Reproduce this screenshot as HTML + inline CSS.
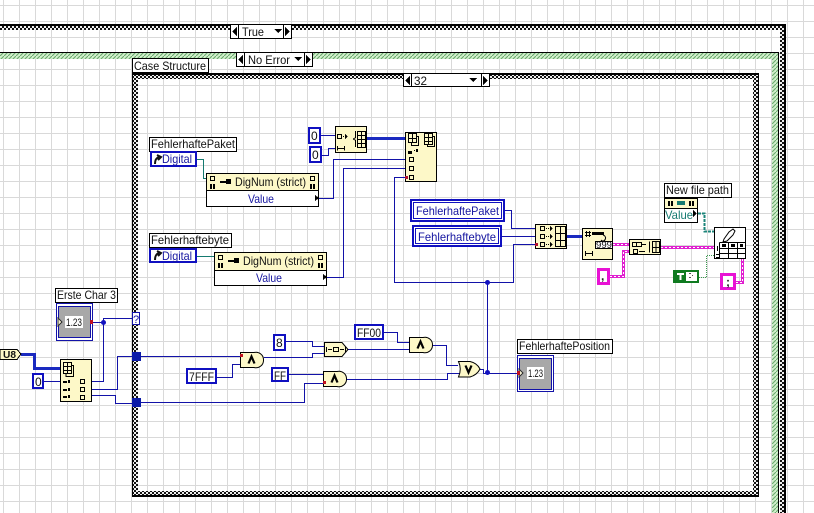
<!DOCTYPE html>
<html><head><meta charset="utf-8"><style>
html,body{margin:0;padding:0;background:#fff;overflow:hidden}
svg{display:block}
text{font-family:"Liberation Sans",sans-serif;font-size:12px;fill:#111}
.b{fill:#1515a0}
.w{fill:none;stroke:#1212a8;stroke-width:1}
.t{fill:none;stroke:#1a2ac0;stroke-width:3}
.n{fill:#fdf8c8;stroke:#000;stroke-width:1}
.l{fill:#fff;stroke:#000;stroke-width:1}
.c{fill:#fff;stroke:#1010c0;stroke-width:2}
.p{fill:none;stroke:#e020d0;stroke-width:3}
.pd{fill:none;stroke:#fff;stroke-width:1;stroke-dasharray:2 2}
.g{fill:none;stroke:#000;stroke-width:1}
.s{fill:#fff;stroke:#000;stroke-width:1}
.k{fill:#000}
</style></head><body>
<svg width="814" height="513" viewBox="0 0 814 513" shape-rendering="crispEdges" xmlns="http://www.w3.org/2000/svg">
<defs>
<pattern id="grid" width="16" height="16" patternUnits="userSpaceOnUse" x="3" y="5"><path d="M0.5 0V16M0 0.5H16" stroke="#d9d9d9" stroke-width="1" fill="none"/></pattern>
<pattern id="chk" width="4" height="4" patternUnits="userSpaceOnUse"><rect width="4" height="4" fill="#eee"/><rect width="2" height="2" fill="#111"/><rect x="2" y="2" width="2" height="2" fill="#111"/></pattern>
<pattern id="hat" width="4" height="4" patternUnits="userSpaceOnUse"><rect width="4" height="4" fill="#d2f0cc"/><path d="M0 4L4 0" stroke="#6aa86e" stroke-width="1.1" shape-rendering="auto"/></pattern>
</defs>
<rect width="814" height="513" fill="#fff"/>
<rect width="814" height="513" fill="url(#grid)"/>

<!-- outer True -->
<path d="M0 24H786V513H780V30H0Z" fill="url(#chk)"/>
<rect x="0" y="24" width="786" height="2" fill="#000"/>
<rect x="784" y="24" width="2" height="489" fill="#000"/>
<!-- green No Error -->
<path d="M0 52H779V513H772V59H0Z" fill="url(#hat)"/>
<rect x="0" y="52" width="779" height="1" fill="#000"/>
<rect x="778" y="52" width="1" height="461" fill="#000"/>
<!-- case 32 -->
<path d="M132 73H759V497H132ZM138 79V491H753V79Z" fill="url(#chk)" fill-rule="evenodd"/>
<rect x="132" y="73" width="627" height="2" fill="#000"/>
<rect x="132" y="495" width="627" height="2" fill="#000"/>
<rect x="132" y="73" width="1" height="424" fill="#000"/>
<rect x="758" y="73" width="1" height="424" fill="#000"/>

<!-- selectors -->
<g>
<rect class="s" x="230.5" y="24.5" width="61" height="14"/><path class="g" d="M238.5 25V38M283.5 25V38"/>
<path class="k" d="M237 27V36L232 31.500Z"/><path class="k" d="M285 27V36L290 31.500Z"/><path class="k" d="M274 29H282L278 33Z"/>
<text x="242" y="36" textLength="22" lengthAdjust="spacingAndGlyphs">True</text>
<rect class="s" x="236.500" y="52.500" width="76" height="14"/><path class="g" d="M244.500 53V66M304.500 53V66"/>
<path class="k" d="M243 55V64L238 59.500Z"/><path class="k" d="M306 55V64L311 59.500Z"/><path class="k" d="M294 57H302L298 61Z"/>
<text x="248" y="64" textLength="42" lengthAdjust="spacingAndGlyphs">No Error</text>
<rect class="s" x="403.500" y="73.500" width="86" height="13"/><path class="g" d="M411.500 74V86M481.500 74V86"/>
<path class="k" d="M410 76V85L405 80.500Z"/><path class="k" d="M483 76V85L488 80.500Z"/><path class="k" d="M469 78H477L473 82Z"/>
<text x="414" y="85" textLength="13" lengthAdjust="spacingAndGlyphs">32</text>
<rect class="s" x="132.500" y="58.500" width="76" height="14"/>
<text x="134" y="70" textLength="72" lengthAdjust="spacingAndGlyphs">Case Structure</text>
</g>

<!-- wires -->
<g>
<path d="M197 159.500H203.500V178.500H207" fill="none" stroke="#157a70"/>
<path d="M197 256.500H214" fill="none" stroke="#157a70"/>
<path class="w" d="M319 198.500H333.500V159.500H405"/>
<path class="w" d="M327 277.500H343.500V168.500H405"/>
<path class="w" d="M405 177.500H394.500V282.500H513.500V244.500H535"/>
<path class="w" d="M487.500 282V373"/>
<path class="w" d="M321 135.500H335"/>
<path class="w" d="M322 155.500H328.500V148.500H335"/>
<path class="t" d="M367 138.500H405"/>
<path class="w" d="M505 210.500H511.500V228.500H535"/>
<path class="w" d="M502 236.500H535"/>
<path class="t" d="M567 236.500H582"/>
<path d="M698 213.500H704.500V231.500H714" fill="none" stroke="#1c857a" stroke-width="2" stroke-dasharray="3 1"/>
<path d="M699 277.500H706.500V255.500H714" fill="none" stroke="#3c9a50" stroke-width="1" stroke-dasharray="1 1"/>
<path class="p" d="M613 244.500H629"/><path class="pd" d="M613 244.500H629"/>
<path class="p" d="M661 247.500H714"/><path class="pd" d="M661 247.500H714"/>
<path class="p" d="M610 276.500H623.500V251.500H629"/><path class="pd" d="M610 276.500H623.500V251.500H629"/>
<path class="p" d="M736 282.500H742.500V259"/><path class="pd" d="M736 282.500H742.500V259"/>
<path class="w" d="M93 322.500H103.500V318.500H132"/>
<path class="w" d="M103.500 322V381.500H92"/>
<path class="t" d="M21 354.500H34.500V368.500H61"/>
<path class="w" d="M44 381.500H61"/>
<path class="w" d="M92 389.500H117.500V356.500H132"/>
<path class="w" d="M92 395.500H115.500V403.500H132"/>
<path class="w" d="M141 356.500H240"/>
<path class="w" d="M141 402.500H304.500V383.500H323"/>
<path class="w" d="M217 377.500H232.500V364.500H240"/>
<path class="w" d="M286 341.500H312.500V346.500H324"/>
<path class="w" d="M264 357.500H312.500V353.500H324"/>
<path class="w" d="M289 374.500H323"/>
<path class="w" d="M384 332.500H397.500V342.500H409"/>
<path class="w" d="M348 349.500H409"/>
<path class="w" d="M433 345.500H446.500V365.500H458"/>
<path class="w" d="M347 379.500H447.500V373.500H460"/>
<path class="w" d="M480 369.500H483.500V373.500H518"/>
</g>
<g shape-rendering="auto" fill="#1212c0">
<circle cx="487.500" cy="282.500" r="2.500"/><circle cx="487.500" cy="372.500" r="2.500"/><circle cx="103.500" cy="322.500" r="2.500"/>
</g>
<rect x="132" y="352" width="9" height="9" fill="#0a1aa8"/>
<rect x="132" y="398" width="9" height="9" fill="#0a1aa8"/>
<rect x="132.500" y="312.500" width="7" height="12" fill="#fff" stroke="#1212a8"/>
<text x="133" y="323" style="font-size:11px;fill:#1212a8">?</text>

<!-- FehlerhaftePaket control + node -->
<rect class="l" x="149.500" y="137.500" width="87" height="14"/>
<text x="151" y="148" textLength="84" lengthAdjust="spacingAndGlyphs">FehlerhaftePaket</text>
<rect class="c" x="151" y="152" width="45" height="14"/>
<path d="M155 164C155 160 156 158 159 157M157 155L161 157L158 160" fill="none" stroke="#111" stroke-width="2" shape-rendering="auto"/>
<text x="162" y="163" textLength="30" lengthAdjust="spacingAndGlyphs" class="b">Digital</text>
<rect class="l" x="206.500" y="173.500" width="112" height="33"/>
<rect class="n" x="206.500" y="173.500" width="112" height="17"/>
<path class="g" d="M210.500 176.500H214.500V180.500H210.500Z M310.500 176.500H314.500V180.500H310.500Z"/>
<path class="k" d="M210 184h2v5h-2zM213 184h2v5h-2zM310 184h2v5h-2zM313 184h2v5h-2z"/>
<path class="k" d="M220 181H226V179H231V184H226V183H220Z"/>
<text x="235" y="186" textLength="71" lengthAdjust="spacingAndGlyphs">DigNum (strict)</text>
<text x="248" y="203" textLength="26" lengthAdjust="spacingAndGlyphs" class="b">Value</text>
<path class="k" d="M315 195V201L319 198Z"/>

<!-- Fehlerhaftebyte control + node -->
<rect class="l" x="149.500" y="233.500" width="82" height="14"/>
<text x="151" y="244" textLength="78" lengthAdjust="spacingAndGlyphs">Fehlerhaftebyte</text>
<rect class="c" x="150" y="249" width="46" height="13"/>
<path d="M155 260C155 256 156 254 159 253M157 251L161 253L158 256" fill="none" stroke="#111" stroke-width="2" shape-rendering="auto"/>
<text x="162" y="260" textLength="30" lengthAdjust="spacingAndGlyphs" class="b">Digital</text>
<rect class="l" x="214.500" y="252.500" width="112" height="33"/>
<rect class="n" x="214.500" y="252.500" width="112" height="18"/>
<path class="g" d="M218.500 255.500H222.500V259.500H218.500Z M318.500 255.500H322.500V259.500H318.500Z"/>
<path class="k" d="M218 263h2v5h-2zM221 263h2v5h-2zM318 263h2v5h-2zM321 263h2v5h-2z"/>
<path class="k" d="M228 260H234V258H239V263H234V262H228Z"/>
<text x="243" y="265" textLength="71" lengthAdjust="spacingAndGlyphs">DigNum (strict)</text>
<text x="256" y="282" textLength="26" lengthAdjust="spacingAndGlyphs" class="b">Value</text>
<path class="k" d="M323 274V280L327 277Z"/>

<!-- zero constants -->
<rect class="c" x="309" y="128" width="11" height="15"/><text x="311" y="140">0</text>
<rect class="c" x="310" y="147" width="11" height="15"/><text x="312" y="159">0</text>

<!-- init array -->
<rect class="n" x="335.500" y="126.500" width="31" height="26"/>
<path class="g" d="M337.500 134.500H341.500V138.500H337.500Z M337.500 146V150.500M344.500 146V150.500M337.500 148.500H344.500"/>
<path class="k" d="M343 136h1v1h-1zM345 134l3 2.500-3 2.500z"/>
<path class="g" d="M355.500 131V137.500L353.500 139L355.500 140.500V147"/>
<path class="g" d="M357.500 131.500H365.500V147.500H357.500Z M357 135.500H366M357 139.500H366M357 143.500H366M361.500 131V148"/>

<!-- build array big -->
<rect class="n" x="405.500" y="132.500" width="31" height="49"/>
<path class="g" d="M408.500 133.500H416.500V142.500H408.500Z M408 138.500H417M412.500 133V143M417 136.500H418.500V145.500H411.500V143"/>
<path class="g" d="M424.500 133.500H432.500V144.500H424.500Z M424 137.500H433M424 141.500H433M428.500 133V145M433 136.500H434.500V146.500H427.500V145"/>
<path class="k" d="M408 151h4v3h-4zM414 150h1v1h-1zM416 149h2v3h-2z"/>
<path class="g" d="M409.500 157.500H413.500V161.500H409.500Z M409.500 166.500H413.500V170.500H409.500Z M409.500 175.500H413.500V179.500H409.500Z"/>
<rect x="405" y="176" width="3" height="3" fill="#b01030"/>

<!-- Fehlerhafte indicators -->
<rect x="411" y="200" width="93" height="21" fill="#fff" stroke="#1010c0" stroke-width="2"/>
<rect x="413.500" y="202.500" width="88" height="16" fill="#fff" stroke="#1010c0"/>
<text x="416" y="215" textLength="83" lengthAdjust="spacingAndGlyphs" class="b">FehlerhaftePaket</text>
<rect x="413" y="226" width="88" height="20" fill="#fff" stroke="#1010c0" stroke-width="2"/>
<rect x="415.500" y="228.500" width="83" height="15" fill="#fff" stroke="#1010c0"/>
<text x="418" y="241" textLength="78" lengthAdjust="spacingAndGlyphs" class="b">Fehlerhaftebyte</text>

<!-- build 3 -->
<rect class="n" x="535.500" y="224.500" width="31" height="24"/>
<path class="g" d="M540.500 226.500H544.500V230.500H540.500Z M540.500 234.500H544.500V238.500H540.500Z M540.500 242.500H544.500V246.500H540.500Z"/>
<path class="k" d="M546 228h1v1h-1zM548 228h1v1h-1zM550 226l3 2.500-3 2.500zM546 236h1v1h-1zM548 236h1v1h-1zM550 234l3 2.500-3 2.500zM546 244h1v1h-1zM548 244h1v1h-1zM550 242l3 2.500-3 2.500z"/>
<path class="g" d="M555.500 226.500H565.500V246.500H555.500Z M555 233.500H566M555 240.500H566M560.500 226V247"/>
<rect x="535" y="243" width="3" height="3" fill="#b01030"/>

<!-- number to string -->
<rect class="n" x="582.500" y="228.500" width="30" height="31"/>
<path class="k" d="M585 232h6v1h-6zM585 235h6v1h-6zM586 231h1v6h-1zM589 231h1v6h-1z M592 232h12v3h-12z"/>
<path d="M603 235a3 3 0 1 1 -1 6M601 240l2 2 2 -2" fill="none" stroke="#000" shape-rendering="auto"/>
<rect x="595.500" y="241.500" width="17" height="7" fill="#fff" stroke="#000"/>
<text x="596" y="248" textLength="16" lengthAdjust="spacingAndGlyphs" style="font-size:9px;">999</text>
<path class="g" d="M585.500 251V256M592.500 251V256M585.500 253.500H592.500"/>

<!-- concat -->
<rect class="n" x="629.500" y="239.500" width="31" height="15"/>
<path class="g" d="M632.500 242.500H641.500V246.500H632.500Z M636.500 242V247 M633.500 249.500H637.500V253.500H633.500Z"/>
<path class="k" d="M642 244h4v1h-4zM639 251h6v1h-6z"/>
<path class="g" d="M649.500 241.500V252.500 M652.500 241.500H659.500V252.500H652.500Z M652 247.500H660M656 241V253"/>

<!-- pink constants -->
<rect x="598.500" y="269.500" width="10" height="14" fill="#fff" stroke="#e812d4" stroke-width="3"/>
<text x="601" y="280" style="font-weight:bold;fill:#222">,</text>
<rect x="721.500" y="274.500" width="13" height="14" fill="#fff" stroke="#e812d4" stroke-width="3"/>
<text x="726" y="286" style="font-weight:bold;fill:#222">;</text>

<!-- New file path -->
<rect class="l" x="664.500" y="183.500" width="67" height="14"/>
<text x="666" y="194" textLength="63" lengthAdjust="spacingAndGlyphs">New file path</text>
<rect class="l" x="664.500" y="198.500" width="33" height="24"/>
<rect class="n" x="664.500" y="198.500" width="33" height="10"/>
<path class="k" d="M668 201h2v5h-2zM671 201h2v5h-2zM689 201h2v5h-2zM692 201h2v5h-2z"/>
<rect x="677" y="201" width="8" height="4" fill="#157a70"/>
<text x="665" y="219" textLength="28" lengthAdjust="spacingAndGlyphs" style="fill:#157a70">Value</text>
<path class="k" d="M693 210V217L697 213.500Z"/>

<!-- T const -->
<rect x="674" y="271" width="24" height="11" fill="#fff" stroke="#0f7a20" stroke-width="2"/>
<rect x="675" y="271" width="11" height="11" fill="#0f7a20"/>
<path d="M677 273H684V275H681.500V280H679.500V275H677Z" fill="#fff"/>
<path d="M689 273h2v1h-2zM692 275h1v1h-1zM689 277h2v1h-2z" fill="#555"/>

<!-- write spreadsheet -->
<rect x="714.500" y="227.500" width="31" height="31" fill="#fff" stroke="#000"/>
<path d="M724 239L729 232L733 229L735 231L733 235L727 241L723 242Z" fill="#fff" stroke="#000" shape-rendering="auto"/>
<path class="g" d="M719.500 242.500H745 M719.500 242.500V258 M719.500 248.500H745M719.500 253.500H745M728.500 242V258M737.500 242V258"/>
<rect x="722" y="244" width="4" height="3" fill="#000"/><rect x="731" y="244" width="4" height="3" fill="#000"/><rect x="740" y="244" width="3" height="3" fill="#000"/>
<path class="k" d="M717 246h1v5h-1zM716 254h3v1h-3zM716 257h3v1h-3z"/>

<!-- Erste Char 3 -->
<rect class="l" x="55.500" y="288.500" width="62" height="14"/>
<text x="57" y="299" textLength="59" lengthAdjust="spacingAndGlyphs">Erste Char 3</text>
<rect x="56.500" y="303.500" width="36" height="37" fill="#fff" stroke="#1212a8"/>
<rect x="58.500" y="306.500" width="32" height="31" fill="#a8a8a8" stroke="#1212a8"/>
<rect x="65" y="316" width="18" height="12" fill="#fff"/>
<text x="66" y="326" textLength="16" lengthAdjust="spacingAndGlyphs" style="font-size:11px">1.23</text>
<path d="M58 318V326L62 322Z" fill="#f4f0d0" stroke="#333"/>
<rect x="90" y="320" width="3" height="4" fill="#c01020"/>

<!-- U8 -->
<path d="M0 349.500H17L21 354L17 359.500H0Z" fill="#fdf8c8" stroke="#000"/>
<text x="3" y="358" textLength="13" lengthAdjust="spacingAndGlyphs" style="font-weight:bold;font-size:10px;fill:#111">U8</text>

<!-- index array -->
<rect class="n" x="60.500" y="359.500" width="31" height="42"/>
<path class="g" d="M63.500 362.500H71.500V373.500H63.500Z M63 366.500H72M63 370.500H72M67.500 362V374M72 365.500H73.500V376.500H66V374"/>
<path class="k" d="M63 381h4v2h-4zM68 380h2v3h-2zM63 389h4v2h-4zM68 388h2v3h-2zM63 396h4v2h-4zM68 395h2v3h-2z"/>
<path class="g" d="M80.500 379.500H84.500V383.500H80.500Z M80.500 387.500H84.500V391.500H80.500Z M80.500 395.500H84.500V399.500H80.500Z"/>
<rect class="c" x="33" y="374" width="10" height="14"/><text x="35" y="386">0</text>

<!-- logic const -->
<rect class="c" x="187" y="369" width="29" height="14"/><text x="189" y="381" textLength="25" lengthAdjust="spacingAndGlyphs">7FFF</text>
<rect class="c" x="274" y="335" width="11" height="15"/><text x="276" y="347">8</text>
<rect class="c" x="272" y="368" width="16" height="13"/><text x="274" y="380" textLength="12" lengthAdjust="spacingAndGlyphs">FF</text>
<rect class="c" x="355" y="325" width="28" height="14"/><text x="357" y="337" textLength="24" lengthAdjust="spacingAndGlyphs">FF00</text>

<!-- gates -->
<g shape-rendering="auto">
<path d="M240.500 352.500H254A7.500 7.500 0 0 1 263.500 360A7.500 7.500 0 0 1 254 367.500H240.500Z" class="n"/>
<path d="M323.500 371.500H337A7.500 7.500 0 0 1 346.500 379A7.500 7.500 0 0 1 337 386.500H323.500Z" class="n"/>
<path d="M409.500 337.500H423A7.500 7.500 0 0 1 432.500 345A7.500 7.500 0 0 1 423 352.500H409.500Z" class="n"/>
<path d="M458.500 361.500H470Q477 363 480 369Q477 375 470 377H458.500Q462 369 458.500 361.500Z" class="n"/>
<path d="M324.500 342.500H342L348 349.500L342 356.500H324.500Z" class="n"/>
<path d="M248.500 363.500L251.500 356.500L254.500 363.500" fill="none" stroke="#000" stroke-width="2.200"/>
<path d="M331.500 382.500L334.500 375.500L337.500 382.500" fill="none" stroke="#000" stroke-width="2.200"/>
<path d="M417.500 348.500L420.500 341.500L423.500 348.500" fill="none" stroke="#000" stroke-width="2.200"/>
<path d="M465.500 365.500L468.500 372.500L471.500 365.500" fill="none" stroke="#000" stroke-width="2.200"/>
</g>
<path class="g" d="M326.500 347V352M328 349.500H332M333.500 347.500H338.500V351.500H333.500ZM340 349.500H344M345.500 347V352"/>
<rect x="240" y="354" width="3" height="3" fill="#c01020"/>
<rect x="323" y="381" width="3" height="3" fill="#c01020"/>

<!-- FehlerhaftePosition -->
<rect class="l" x="517.500" y="339.500" width="95" height="14"/>
<text x="519" y="350" textLength="91" lengthAdjust="spacingAndGlyphs">FehlerhaftePosition</text>
<rect x="517.500" y="355.500" width="36" height="36" fill="#fff" stroke="#1212a8"/>
<rect x="519.500" y="358.500" width="32" height="31" fill="#a8a8a8" stroke="#1212a8"/>
<rect x="527" y="367" width="17" height="12" fill="#fff"/>
<text x="528" y="377" textLength="15" lengthAdjust="spacingAndGlyphs" style="font-size:11px">1.23</text>
<path d="M519 369V377L523 373Z" fill="#f4f0d0" stroke="#333"/>
<rect x="517" y="371" width="3" height="4" fill="#c01020"/>
</svg>
</body></html>
